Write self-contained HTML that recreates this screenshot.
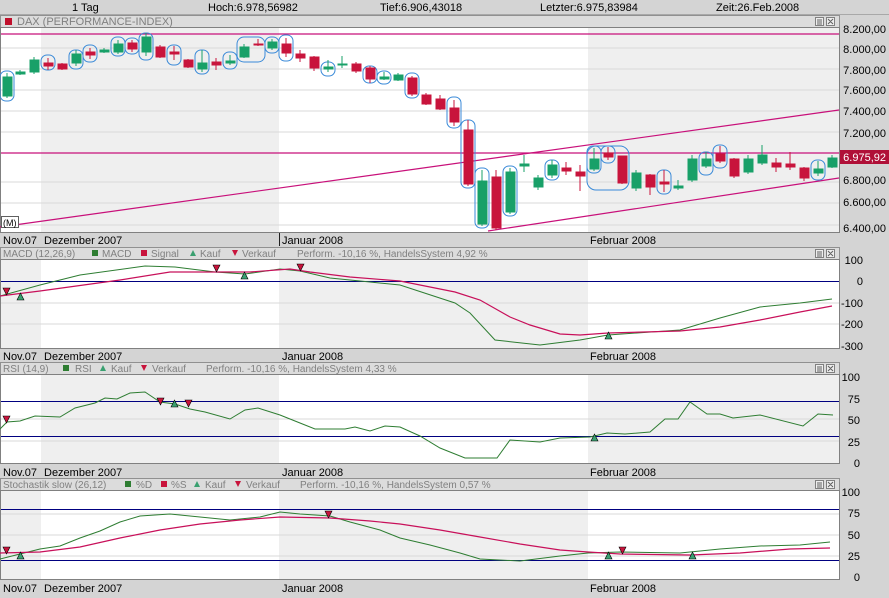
<!DOCTYPE html>
<html><head><meta charset="utf-8"><style>
html,body{margin:0;padding:0;background:#d4d4d4;}
svg{display:block;font-family:"Liberation Sans",sans-serif;}
</style></head><body>
<svg width="889" height="598" viewBox="0 0 889 598" xmlns="http://www.w3.org/2000/svg" font-size="11">
<rect width="889" height="598" fill="#d4d4d4"/>
<!-- top bar -->
<g fill="#000" font-size="11">
<text x="72" y="11">1 Tag</text>
<text x="208" y="11">Hoch:6.978,56982</text>
<text x="380" y="11">Tief:6.906,43018</text>
<text x="540" y="11">Letzter:6.975,83984</text>
<text x="716" y="11">Zeit:26.Feb.2008</text>
</g>
<line x1="0" y1="14.5" x2="889" y2="14.5" stroke="#a8a8a8"/>

<!-- ===== MAIN PANEL ===== -->
<rect x="0.5" y="15.5" width="839" height="12" fill="#dcdcdc" stroke="#909090"/>
<rect x="5" y="18" width="7" height="7" fill="#c0102c"/>
<text x="17" y="25" fill="#808080" font-size="11">DAX (PERFORMANCE-INDEX)</text>
<g fill="#eee" stroke="#808080" stroke-width="1"><rect x="815.5" y="17.5" width="8" height="8"/><rect x="826.5" y="17.5" width="8" height="8"/></g>
<path d="M817 20h5M817 22h5M817 24h5M828 19l5 5M833 19l-5 5" stroke="#606060"/>
<rect x="0.5" y="27.5" width="839" height="205" fill="#fff" stroke="#808080"/>
<rect x="41" y="28" width="238" height="204" fill="#efefef"/>
<rect x="588" y="28" width="251" height="204" fill="#efefef"/>
<g stroke="#d8d8d8"><path d="M1 48H839M1 69H839M1 90H839M1 111H839M1 132H839M1 182H839M1 203H839M1 225H839"/></g>
<line x1="1" y1="34" x2="839" y2="34" stroke="#c8107a" stroke-width="1.2"/>
<line x1="1" y1="153" x2="839" y2="153" stroke="#c8107a" stroke-width="1.2"/>
<line x1="0" y1="227" x2="839" y2="110" stroke="#c8107a" stroke-width="1.2"/>
<line x1="488" y1="231" x2="839" y2="178" stroke="#c8107a" stroke-width="1.2"/>

<!-- blue ellipses -->
<g fill="none" stroke="#3a8ad8" stroke-width="1">
<rect x="0" y="71" width="14" height="30" rx="6"/>
<rect x="41" y="55" width="14" height="15" rx="6"/>
<rect x="69" y="50" width="14" height="19" rx="6"/>
<rect x="83" y="45" width="14" height="17" rx="6"/>
<rect x="111" y="37" width="14" height="19" rx="6"/>
<rect x="125" y="38" width="14" height="16" rx="6"/>
<rect x="139" y="33" width="14" height="27" rx="6"/>
<rect x="167" y="45" width="14" height="20" rx="6"/>
<rect x="195" y="50" width="14" height="24" rx="6"/>
<rect x="223" y="52" width="14" height="17" rx="6"/>
<rect x="237" y="37" width="28" height="25" rx="7"/>
<rect x="265" y="37" width="14" height="16" rx="6"/>
<rect x="279" y="35" width="14" height="26" rx="6"/>
<rect x="321" y="62" width="14" height="14" rx="6"/>
<rect x="363" y="66" width="14" height="17" rx="6"/>
<rect x="377" y="71" width="14" height="13" rx="6"/>
<rect x="405" y="73" width="14" height="25" rx="6"/>
<rect x="447" y="97" width="14" height="31" rx="6"/>
<rect x="461" y="120" width="14" height="68" rx="6"/>
<rect x="475" y="168" width="14" height="60" rx="6"/>
<rect x="503" y="166" width="14" height="50" rx="6"/>
<rect x="545" y="160" width="14" height="20" rx="6"/>
<rect x="587" y="146" width="14" height="27" rx="6"/>
<rect x="601" y="146" width="14" height="17" rx="6"/>
<rect x="587" y="146" width="42" height="44" rx="9"/>
<rect x="657" y="170" width="14" height="24" rx="6"/>
<rect x="699" y="152" width="14" height="23" rx="6"/>
<rect x="713" y="145" width="14" height="23" rx="6"/>
<rect x="811" y="160" width="14" height="20" rx="6"/>
</g>

<!-- candles -->
<g stroke-width="1">
<g stroke="#18a068" fill="#18a068">
<path d="M7 73V98M20 70V75M34 57V74M76 50V66M104 48V53M118 40V54M146 33V56M202 50V72M230 55V65M244 44V58M272 39V50M328 60V72M342 56V68M384 72V80M398 73V81M482 170V226M510 168V214M524 155V172M538 175V190M552 160V178M594 148V171M636 170V191M678 180V190M692 155V182M706 152V168M748 155V174M762 145V165M818 161V176M832 155V168"/>
<rect x="3" y="77" width="9" height="19"/><rect x="16" y="72" width="9" height="2"/><rect x="30" y="60" width="9" height="12"/>
<rect x="72" y="54" width="9" height="9"/><rect x="100" y="50" width="9" height="2"/><rect x="114" y="44" width="9" height="8"/>
<rect x="142" y="37" width="9" height="15"/><rect x="198" y="63" width="9" height="6"/><rect x="226" y="61" width="9" height="2"/>
<rect x="240" y="47" width="9" height="10"/><rect x="268" y="42" width="9" height="6"/><rect x="324" y="67" width="9" height="2"/>
<rect x="338" y="64" width="9" height="1"/><rect x="380" y="77" width="9" height="2"/><rect x="394" y="75" width="9" height="5"/>
<rect x="478" y="181" width="9" height="43"/><rect x="506" y="172" width="9" height="40"/><rect x="520" y="164" width="9" height="2"/>
<rect x="534" y="178" width="9" height="9"/><rect x="548" y="165" width="9" height="10"/><rect x="590" y="159" width="9" height="10"/>
<rect x="632" y="173" width="9" height="15"/><rect x="674" y="186" width="9" height="2"/><rect x="688" y="159" width="9" height="21"/>
<rect x="702" y="159" width="9" height="7"/><rect x="744" y="159" width="9" height="13"/><rect x="758" y="155" width="9" height="8"/>
<rect x="814" y="169" width="9" height="4"/><rect x="828" y="158" width="9" height="9"/>
</g>
<g stroke="#c8143c" fill="#c8143c">
<path d="M48 58V70M62 63V70M90 48V59M132 40V52M160 45V58M174 46V60M188 59V68M216 58V70M258 39V46M286 38V57M300 50V62M314 56V71M356 62V73M370 66V83M412 76V96M426 93V105M440 95V110M454 100V126M468 120V186M496 170V230M566 162V175M580 165V191M608 147V160M622 156V184M650 174V195M664 170V192M720 146V163M734 158V178M776 158V172M790 152V170M804 167V181"/>
<rect x="44" y="63" width="9" height="3"/><rect x="58" y="64" width="9" height="5"/><rect x="86" y="52" width="9" height="3"/>
<rect x="128" y="43" width="9" height="6"/><rect x="156" y="47" width="9" height="10"/><rect x="170" y="52" width="9" height="2"/>
<rect x="184" y="60" width="9" height="7"/><rect x="212" y="62" width="9" height="3"/><rect x="254" y="44" width="9" height="1"/>
<rect x="282" y="44" width="9" height="9"/><rect x="296" y="54" width="9" height="4"/><rect x="310" y="57" width="9" height="11"/>
<rect x="352" y="64" width="9" height="7"/><rect x="366" y="68" width="9" height="11"/><rect x="408" y="78" width="9" height="16"/>
<rect x="422" y="95" width="9" height="9"/><rect x="436" y="99" width="9" height="10"/><rect x="450" y="108" width="9" height="14"/>
<rect x="464" y="130" width="9" height="54"/><rect x="492" y="177" width="9" height="51"/><rect x="562" y="168" width="9" height="3"/>
<rect x="576" y="172" width="9" height="4"/><rect x="604" y="153" width="9" height="4"/><rect x="618" y="156" width="9" height="27"/>
<rect x="646" y="175" width="9" height="12"/><rect x="660" y="182" width="9" height="2"/><rect x="716" y="154" width="9" height="7"/>
<rect x="730" y="159" width="9" height="17"/><rect x="772" y="163" width="9" height="4"/><rect x="786" y="164" width="9" height="3"/>
<rect x="800" y="168" width="9" height="10"/>
</g>
</g>
<rect x="1.5" y="216.5" width="17" height="11" fill="#fff" stroke="#606060"/>
<text x="3" y="226" font-size="9">(M)</text>

<!-- price axis -->
<g font-size="11" fill="#000" text-anchor="end">
<text x="886" y="33">8.200,00</text><text x="886" y="53">8.000,00</text><text x="886" y="74">7.800,00</text>
<text x="886" y="94">7.600,00</text><text x="886" y="115">7.400,00</text><text x="886" y="137">7.200,00</text>
<text x="886" y="184">6.800,00</text><text x="886" y="206">6.600,00</text><text x="886" y="232">6.400,00</text>
</g>
<rect x="840" y="150" width="49" height="14" fill="#b01038"/>
<text x="886" y="161" font-size="11" fill="#fff" text-anchor="end">6.975,92</text>

<!-- date bar main -->
<g font-size="11" fill="#000">
<text x="3" y="244">Nov.07</text><text x="44" y="244">Dezember 2007</text><text x="282" y="244">Januar 2008</text><text x="590" y="244">Februar 2008</text>
</g>
<line x1="279.5" y1="233" x2="279.5" y2="246" stroke="#202020"/>

<!-- ===== MACD ===== -->
<rect x="0.5" y="247.5" width="839" height="12" fill="#dcdcdc" stroke="#909090"/>
<g font-size="10" fill="#808080">
<text x="3" y="257">MACD (12,26,9)</text>
<rect x="92" y="250" width="6" height="6" fill="#2e7d32"/><text x="102" y="257">MACD</text>
<rect x="141" y="250" width="6" height="6" fill="#c8143c"/><text x="151" y="257">Signal</text>
<path d="M190 256l3-6 3 6z" fill="#3aa070"/><text x="200" y="257">Kauf</text>
<path d="M232 250l3 6 3-6z" fill="#c8143c"/><text x="242" y="257">Verkauf</text>
<text x="297" y="257">Perform. -10,16 %, HandelsSystem 4,92 %</text>
</g>
<g fill="#eee" stroke="#808080"><rect x="815.5" y="249.5" width="8" height="8"/><rect x="826.5" y="249.5" width="8" height="8"/></g>
<path d="M817 252h5M817 254h5M817 256h5M828 251l5 5M833 251l-5 5" stroke="#606060"/>
<rect x="0.5" y="259.5" width="839" height="89" fill="#fff" stroke="#808080"/>
<rect x="1" y="260" width="40" height="88" fill="#efefef"/>
<rect x="279" y="260" width="309" height="88" fill="#efefef"/>
<g stroke="#d8d8d8"><path d="M1 303H839M1 324H839"/></g>
<line x1="1" y1="281.5" x2="839" y2="281.5" stroke="#000080"/>
<polyline fill="none" stroke="#2e7d32" points="0,296 40,285 80,275 145,266 175,267 215,272 245,274 280,269 300,271 330,278 370,282 400,285 455,303 470,313 495,340 540,345 580,340 608,335 680,330 720,318 760,307 800,303 832,299"/>
<polyline fill="none" stroke="#c8105a" stroke-width="1.2" points="0,296 40,291 120,280 170,272 210,272 250,272 290,269 310,272 350,277 400,281 455,292 480,300 510,317 530,325 560,334 580,335 608,333 680,331 720,327 760,320 800,312 832,306"/>
<g stroke="#000" stroke-width="0.6">
<path d="M3 288h7l-3.5 7z" fill="#c8143c"/><path d="M17 300h7l-3.5-7z" fill="#3aa070"/>
<path d="M213 265h7l-3.5 7z" fill="#c8143c"/><path d="M241 279h7l-3.5-7z" fill="#3aa070"/>
<path d="M297 264h7l-3.5 7z" fill="#c8143c"/><path d="M605 339h7l-3.5-7z" fill="#3aa070"/>
</g>
<g font-size="11" fill="#000" text-anchor="end">
<text x="863" y="264">100</text><text x="863" y="285">0</text><text x="863" y="307">-100</text><text x="863" y="328">-200</text><text x="863" y="350">-300</text>
</g>
<g font-size="11" fill="#000">
<text x="3" y="360">Nov.07</text><text x="44" y="360">Dezember 2007</text><text x="282" y="360">Januar 2008</text><text x="590" y="360">Februar 2008</text>
</g>

<!-- ===== RSI ===== -->
<rect x="0.5" y="362.5" width="839" height="12" fill="#dcdcdc" stroke="#909090"/>
<g font-size="10" fill="#808080">
<text x="3" y="372">RSI (14,9)</text>
<rect x="63" y="365" width="6" height="6" fill="#2e7d32"/><text x="75" y="372">RSI</text>
<path d="M100 371l3-6 3 6z" fill="#3aa070"/><text x="111" y="372">Kauf</text>
<path d="M141 365l3 6 3-6z" fill="#c8143c"/><text x="152" y="372">Verkauf</text>
<text x="206" y="372">Perform. -10,16 %, HandelsSystem 4,33 %</text>
</g>
<g fill="#eee" stroke="#808080"><rect x="815.5" y="364.5" width="8" height="8"/><rect x="826.5" y="364.5" width="8" height="8"/></g>
<path d="M817 367h5M817 369h5M817 371h5M828 366l5 5M833 366l-5 5" stroke="#606060"/>
<rect x="0.5" y="374.5" width="839" height="89" fill="#fff" stroke="#808080"/>
<rect x="41" y="375" width="238" height="88" fill="#efefef"/>
<rect x="588" y="375" width="251" height="88" fill="#efefef"/>
<g stroke="#d8d8d8"><path d="M1 419H839M1 441H839"/></g>
<line x1="1" y1="401.5" x2="839" y2="401.5" stroke="#000080"/>
<line x1="1" y1="436.5" x2="839" y2="436.5" stroke="#000080"/>
<polyline fill="none" stroke="#2e7d32" points="0,429 7,422 20,421 35,416 60,417 75,408 95,403 105,398 117,399 130,393 145,392 160,402 175,404 190,409 205,412 230,419 245,410 258,408 280,415 300,423 315,429 330,429 345,429 355,427 370,431 385,426 400,427 420,436 440,448 465,458 497,458 510,440 540,442 560,438 590,437 607,433 625,434 650,432 665,419 678,419 690,402 707,414 720,414 733,418 760,415 803,426 818,414 833,415"/>
<g stroke="#000" stroke-width="0.6">
<path d="M3 416h7l-3.5 7z" fill="#c8143c"/><path d="M157 398h7l-3.5 7z" fill="#c8143c"/>
<path d="M171 407h7l-3.5-7z" fill="#3aa070"/><path d="M185 400h7l-3.5 7z" fill="#c8143c"/>
<path d="M591 441h7l-3.5-7z" fill="#3aa070"/>
</g>
<g font-size="11" fill="#000" text-anchor="end">
<text x="860" y="381">100</text><text x="860" y="403">75</text><text x="860" y="424">50</text><text x="860" y="446">25</text><text x="860" y="467">0</text>
</g>
<g font-size="11" fill="#000">
<text x="3" y="476">Nov.07</text><text x="44" y="476">Dezember 2007</text><text x="282" y="476">Januar 2008</text><text x="590" y="476">Februar 2008</text>
</g>

<!-- ===== STOCH ===== -->
<rect x="0.5" y="478.5" width="839" height="12" fill="#dcdcdc" stroke="#909090"/>
<g font-size="10" fill="#808080">
<text x="3" y="488">Stochastik slow (26,12)</text>
<rect x="125" y="481" width="6" height="6" fill="#2e7d32"/><text x="136" y="488">%D</text>
<rect x="161" y="481" width="6" height="6" fill="#c8143c"/><text x="171" y="488">%S</text>
<path d="M194 487l3-6 3 6z" fill="#3aa070"/><text x="205" y="488">Kauf</text>
<path d="M235 481l3 6 3-6z" fill="#c8143c"/><text x="246" y="488">Verkauf</text>
<text x="300" y="488">Perform. -10,16 %, HandelsSystem 0,57 %</text>
</g>
<g fill="#eee" stroke="#808080"><rect x="815.5" y="480.5" width="8" height="8"/><rect x="826.5" y="480.5" width="8" height="8"/></g>
<path d="M817 483h5M817 485h5M817 487h5M828 482l5 5M833 482l-5 5" stroke="#606060"/>
<rect x="0.5" y="490.5" width="839" height="89" fill="#fff" stroke="#808080"/>
<rect x="1" y="491" width="40" height="88" fill="#efefef"/>
<rect x="279" y="491" width="309" height="88" fill="#efefef"/>
<g stroke="#d8d8d8"><path d="M1 514H839M1 535H839M1 556H839"/></g>
<line x1="1" y1="509.5" x2="839" y2="509.5" stroke="#000080"/>
<line x1="1" y1="560.5" x2="839" y2="560.5" stroke="#000080"/>
<polyline fill="none" stroke="#2e7d32" points="0,559 20,554 40,549 60,546 80,538 100,531 120,522 140,516 170,514 200,517 230,520 260,517 280,512 300,514 330,516 350,522 380,530 400,538 430,545 460,553 480,559 520,561 560,556 588,553 620,552 680,553 720,549 760,546 800,545 830,542"/>
<polyline fill="none" stroke="#c8105a" stroke-width="1.2" points="0,553 40,552 80,547 120,538 160,530 200,524 240,520 280,517 330,518 370,521 400,524 440,530 480,537 520,544 560,550 588,552 620,554 690,555 740,553 790,549 830,548"/>
<g stroke="#000" stroke-width="0.6">
<path d="M3 547h7l-3.5 7z" fill="#c8143c"/><path d="M17 559h7l-3.5-7z" fill="#3aa070"/>
<path d="M325 511h7l-3.5 7z" fill="#c8143c"/><path d="M605 559h7l-3.5-7z" fill="#3aa070"/>
<path d="M619 547h7l-3.5 7z" fill="#c8143c"/><path d="M689 559h7l-3.5-7z" fill="#3aa070"/>
</g>
<g font-size="11" fill="#000" text-anchor="end">
<text x="860" y="496">100</text><text x="860" y="517">75</text><text x="860" y="539">50</text><text x="860" y="560">25</text><text x="860" y="581">0</text>
</g>
<g font-size="11" fill="#000">
<text x="3" y="592">Nov.07</text><text x="44" y="592">Dezember 2007</text><text x="282" y="592">Januar 2008</text><text x="590" y="592">Februar 2008</text>
</g>
</svg>
</body></html>
